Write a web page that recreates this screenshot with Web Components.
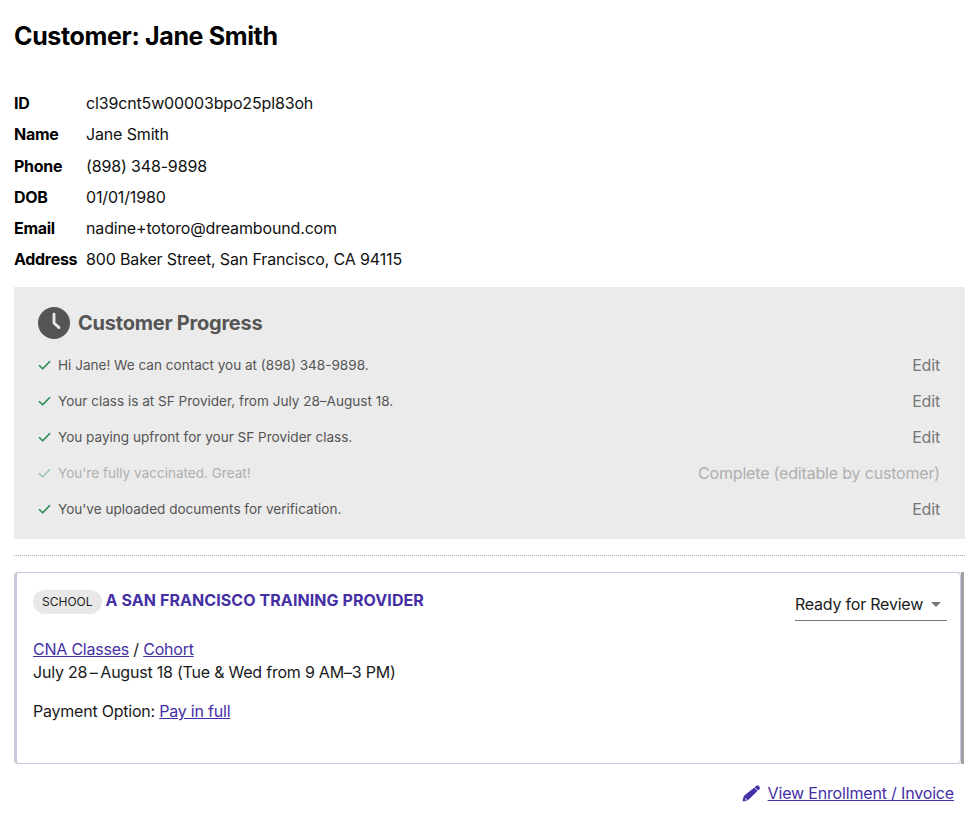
<!DOCTYPE html>
<html>
<head>
<meta charset="utf-8">
<title>Customer</title>
<style>
html, body { margin: 0; background: #fff; }
body { font-family: Inter, "Noto Sans", sans-serif; color: #111; overflow: hidden; }
</style>
</head>
<body>
<customer-page>
  <customer-info slot="info">
    <info-row label="ID">cl39cnt5w00003bpo25pl83oh</info-row>
    <info-row label="Name">Jane Smith</info-row>
    <info-row label="Phone">(898) 348-9898</info-row>
    <info-row label="DOB">01/01/1980</info-row>
    <info-row label="Email">nadine+totoro@dreambound.com</info-row>
    <info-row label="Address">800 Baker Street, San Francisco, CA 94115</info-row>
  </customer-info>
  <progress-panel slot="progress">
    <progress-step action="Edit">Hi Jane! We can contact you at (898) 348-9898.</progress-step>
    <progress-step action="Edit">Your class is at SF Provider, from July 28–August 18.</progress-step>
    <progress-step action="Edit">You paying upfront for your SF Provider class.</progress-step>
    <progress-step action="Complete (editable by customer)" muted>You're fully vaccinated. Great!</progress-step>
    <progress-step action="Edit">You've uploaded documents for verification.</progress-step>
  </progress-panel>
  <enrollment-card slot="card"></enrollment-card>
</customer-page>

<script>
const pageTemplate = document.createElement('template')
pageTemplate.innerHTML = `
<style>
:host { display: block; padding: 0 11px 0 14px; }
h1 { margin: 0; padding-top: 20px; height: 87.6px; box-sizing: border-box; font-size: 25px; line-height: 32px; font-weight: 700; color: #000; letter-spacing: -0.35px; }
hr { border: 0; border-top: 1px dotted #aaa; margin: 16px 0; }
.footer { display: flex; justify-content: flex-end; align-items: center; gap: 8px; padding: 19px 11px 0 0; font-size: 16px; line-height: 20px; letter-spacing: -0.17px; }
.footer a { color: #452fa5; text-decoration: underline; }
svg { width: 17px; height: 17px; fill: #452fa5; stroke: #452fa5; overflow: visible; }
</style>
<h1>Customer: Jane Smith</h1>
<slot name="info"></slot>
<slot name="progress"></slot>
<hr>
<slot name="card"></slot>
<div class="footer">
  <svg viewBox="0 0 17 17"><path stroke-width=".8" d="M11.200 3.100l2.800 2.800-8.600 8.600-4.400 1.500c-.7.200-1.200-.3-1-1l1.500-4.300z"/><path stroke-width=".8" d="M12 2.300l.9-.9c.9-.9 2.200-.9 3 0 .8.800.8 2.100 0 3l-.9.900z"/><path d="M2.700 12.700l1.600 1.600-1.800.6-.4-.4z" fill="#fff" stroke="none" opacity=".75"/></svg>
  <a href="#">View Enrollment / Invoice</a>
</div>`

class CustomerPage extends HTMLElement {
  constructor() {
    super()
    this.attachShadow({ mode: 'open' }).append(pageTemplate.content.cloneNode(true))
  }
}

const infoTemplate = document.createElement('template')
infoTemplate.innerHTML = `
<style>
:host { display: grid; row-gap: 0; padding-bottom: 12.4px; }
</style>
<slot></slot>`

class CustomerInfo extends HTMLElement {
  constructor() {
    super()
    this.attachShadow({ mode: 'open' }).append(infoTemplate.content.cloneNode(true))
  }
}

const rowTemplate = document.createElement('template')
rowTemplate.innerHTML = `
<style>
:host { display: flex; height: 31.2px; align-items: center; font-size: 16px; color: #111; letter-spacing: -0.15px; }
.label { width: 72px; font-weight: 700; color: #000; white-space: nowrap; letter-spacing: -0.3px; }
</style>
<span class="label"></span><span><slot></slot></span>`

class InfoRow extends HTMLElement {
  constructor() {
    super()
    const shadow = this.attachShadow({ mode: 'open' })
    shadow.append(rowTemplate.content.cloneNode(true))
    shadow.querySelector('.label').textContent = this.getAttribute('label')
  }
}

const panelTemplate = document.createElement('template')
panelTemplate.innerHTML = `
<style>
:host { display: block; background: #ebebeb; padding: 20px 25px 12px 24px; color: #555; }
.head { display: flex; align-items: center; gap: 8px; margin-bottom: 8px; }
h2 { margin: 0; font-size: 20px; line-height: 32px; font-weight: 700; color: #555; letter-spacing: -0.23px; }
svg { width: 32px; height: 32px; display: block; }
</style>
<div class="head">
  <svg viewBox="0 0 32 32"><circle cx="16" cy="16" r="16" fill="#555"/><path d="M16 7.200V16l5 4.600" fill="none" stroke="#ebebeb" stroke-width="2.800" stroke-linecap="round" stroke-linejoin="round"/></svg>
  <h2>Customer Progress</h2>
</div>
<slot></slot>`

class ProgressPanel extends HTMLElement {
  constructor() {
    super()
    this.attachShadow({ mode: 'open' }).append(panelTemplate.content.cloneNode(true))
  }
}

const stepTemplate = document.createElement('template')
stepTemplate.innerHTML = `
<style>
:host { display: flex; align-items: center; height: 36px; font-size: 13.55px; color: #555; }
:host([muted]) { opacity: .4; }
svg { width: 13px; height: 10px; margin-right: 7px; flex: none; }
.text { flex: 1; }
.action { font-size: 16px; color: #777; letter-spacing: -0.18px; }
:host([muted]) .action { color: #555; }
</style>
<svg viewBox="0 0 13 10"><path d="M1 5.200l3.700 3.600L12 1.200" fill="none" stroke="#1f8a4c" stroke-width="1.500"/></svg>
<span class="text"><slot></slot></span>
<span class="action"></span>`

class ProgressStep extends HTMLElement {
  constructor() {
    super()
    const shadow = this.attachShadow({ mode: 'open' })
    shadow.append(stepTemplate.content.cloneNode(true))
    shadow.querySelector('.action').textContent = this.getAttribute('action')
  }
}

const cardTemplate = document.createElement('template')
cardTemplate.innerHTML = `
<style>
:host { display: block; box-sizing: border-box; height: 192px; margin-right: 4px; background: #fff; border: 1px solid #c9c6de; border-left: 3px solid #c9c6de; border-radius: 4px; padding: 16px 0 0 16px; position: relative; font-size: 16px; line-height: 23px; color: #1a1a1a; letter-spacing: -0.22px; }
:host::after { content: ""; position: absolute; top: -1px; bottom: -1px; right: -4px; width: 3px; background: #a0a0a0; }
.top { display: flex; justify-content: space-between; align-items: flex-start; height: 49px; padding-right: 13px; }
.title { display: flex; align-items: center; gap: 4px; margin-top: 1px; }
.badge { background: #e8e8e8; border-radius: 12px; font-size: 12px; line-height: 24px; padding: 0 9px; color: #222; letter-spacing: 0; }
.name { font-weight: 700; color: #452fa5; margin-top: -4px; font-size: 16px; letter-spacing: 0.08px; }
.select { width: 152px; box-sizing: border-box; border-bottom: 1px solid #777; display: flex; justify-content: space-between; align-items: center; height: 32px; padding-right: 6px; }
.arrow { width: 0; height: 0; border: 5.500px solid transparent; border-top-color: #777; border-bottom: 0; }
a { color: #452fa5; }
p { margin: 0 0 16px; }
</style>
<div class="top">
  <div class="title"><span class="badge">SCHOOL</span><span class="name">A SAN FRANCISCO TRAINING PROVIDER</span></div>
  <div class="select"><span>Ready for Review</span><span class="arrow"></span></div>
</div>
<p><a href="#">CNA Classes</a> / <a href="#">Cohort</a><br>July 28&#8201;–&#8201;August 18 (Tue &amp; Wed from 9 AM–3 PM)</p>
<p>Payment Option: <a href="#">Pay in full</a></p>`

class EnrollmentCard extends HTMLElement {
  constructor() {
    super()
    this.attachShadow({ mode: 'open' }).append(cardTemplate.content.cloneNode(true))
  }
}

customElements.define('customer-page', CustomerPage)
customElements.define('customer-info', CustomerInfo)
customElements.define('info-row', InfoRow)
customElements.define('progress-panel', ProgressPanel)
customElements.define('progress-step', ProgressStep)
customElements.define('enrollment-card', EnrollmentCard)
</script>
</body>
</html>
